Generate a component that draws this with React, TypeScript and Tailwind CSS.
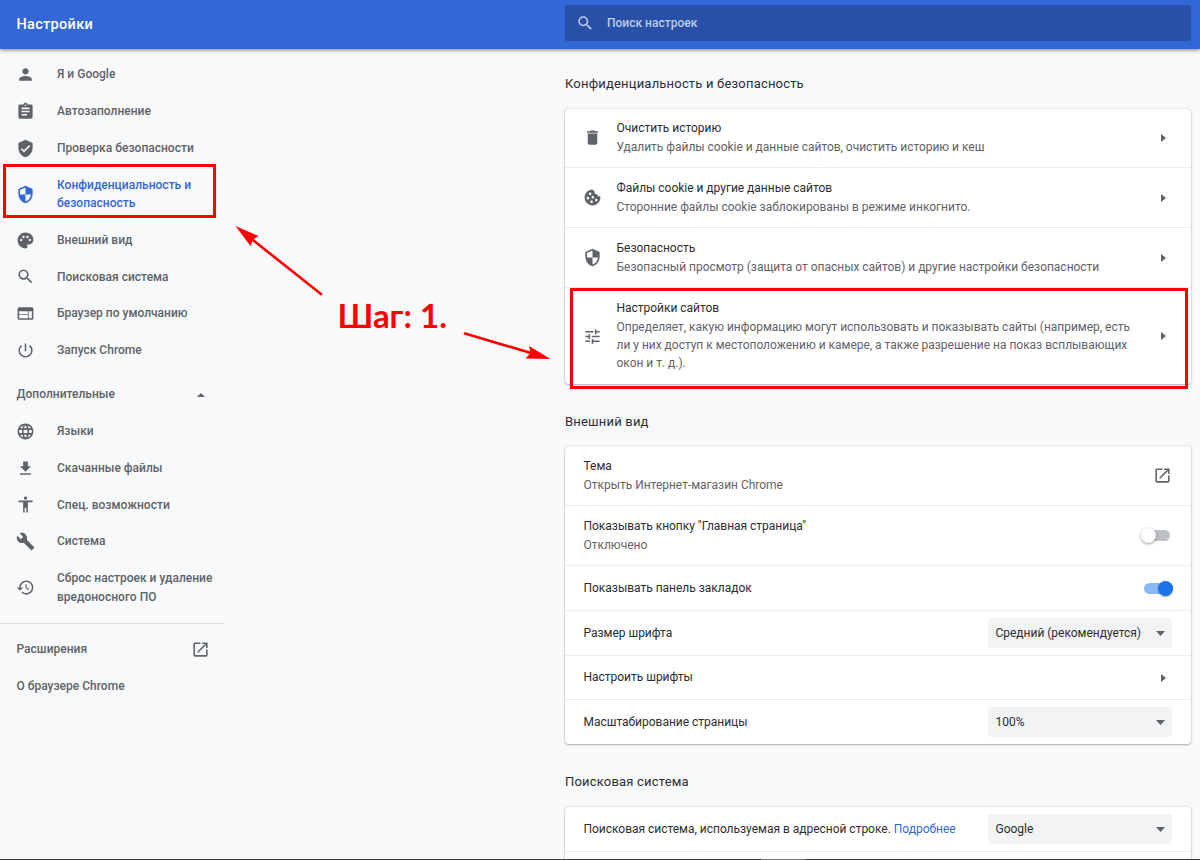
import type { ReactNode } from "react";
import type { IconType } from "react-icons";
import {
  MdPerson, MdAssignment, MdVerifiedUser, MdSecurity, MdPalette, MdSearch, MdWeb,
  MdPowerSettingsNew, MdLanguage, MdFileDownload, MdAccessibility, MdBuild, MdHistory,
  MdOpenInNew, MdDelete, MdTune,
} from "react-icons/md";

type NavEntry = { icon: IconType; lines: string[]; active?: boolean };

const mainNav: NavEntry[] = [
  { icon: MdPerson, lines: ["Я и Google"] },
  { icon: MdAssignment, lines: ["Автозаполнение"] },
  { icon: MdVerifiedUser, lines: ["Проверка безопасности"] },
  { icon: MdSecurity, lines: ["Конфиденциальность и", "безопасность"], active: true },
  { icon: MdPalette, lines: ["Внешний вид"] },
  { icon: MdSearch, lines: ["Поисковая система"] },
  { icon: MdWeb, lines: ["Браузер по умолчанию"] },
  { icon: MdPowerSettingsNew, lines: ["Запуск Chrome"] },
];

const extraNav: NavEntry[] = [
  { icon: MdLanguage, lines: ["Языки"] },
  { icon: MdFileDownload, lines: ["Скачанные файлы"] },
  { icon: MdAccessibility, lines: ["Спец. возможности"] },
  { icon: MdBuild, lines: ["Система"] },
  { icon: MdHistory, lines: ["Сброс настроек и удаление", "вредоносного ПО"] },
];

function NavItem({ icon: Icon, lines, active }: NavEntry) {
  return (
    <a className={`flex items-center py-[9.2px] pl-[16px] ${active ? "text-[#3367d6]" : "text-[#5f6368]"}`}>
      <Icon className="-my-1 mr-[22px] size-[19px] shrink-0" />
      <span>
        {lines.map((line) => (
          <span key={line} className="block whitespace-nowrap">{line}</span>
        ))}
      </span>
    </a>
  );
}

function CookieIcon({ className }: { className?: string }) {
  return (
    <svg viewBox="0 0 24 24" fill="currentColor" className={className}>
      <path
        fillRule="evenodd"
        d="M21.27 10.42c-1.6.52-3.24-.56-3.38-2.42-2.24.1-3.7-1.7-3.2-3.83C12.9 4 12.5 2.7 12.6 2 6.8 1.7 2 6.4 2 12c0 5.52 4.48 10 10 10 5.9 0 10.6-5 9.97-11.2-.25-.05-.48-.18-.7-.38zM9 5.6a1.6 1.6 0 1 1 0 3.2 1.6 1.6 0 0 1 0-3.2zM6.3 11.2a1.6 1.6 0 1 1 0 3.2 1.6 1.6 0 0 1 0-3.2zM12.4 10.2a1.6 1.6 0 1 1 0 3.2 1.6 1.6 0 0 1 0-3.2zM10.8 15.9a1.6 1.6 0 1 1 0 3.2 1.6 1.6 0 0 1 0-3.2zM16.8 13.7a1.6 1.6 0 1 1 0 3.2 1.6 1.6 0 0 1 0-3.2z"
      />
    </svg>
  );
}

function RightCaret() {
  return (
    <svg viewBox="0 0 5 8" className="mr-[6px] h-[8px] w-[5px] shrink-0" fill="#5f6368">
      <path d="M0 0l5 4-5 4z" />
    </svg>
  );
}

function Row({ height, children }: { height: string; children: ReactNode }) {
  return (
    <div className={`flex items-center justify-between border-t border-[#ebecee] pr-[19px] pl-[18px] first:border-t-0 ${height}`}>
      {children}
    </div>
  );
}

function Labels({ title, sub }: { title: string; sub?: string[] }) {
  return (
    <div className="flex-1 pl-[0.5px] whitespace-nowrap">
      <div className="text-[#2c2d30]">{title}</div>
      {sub?.map((s) => (
        <div key={s} className="text-[#5f6368]">{s}</div>
      ))}
    </div>
  );
}

function Select({ value }: { value: string }) {
  return (
    <div className="flex h-[29.5px] w-[184px] items-center justify-between rounded-[4px] bg-[#f1f3f4] pr-[7px] pl-[7.5px] text-[#2c2d30]">
      <span>{value}</span>
      <svg viewBox="0 0 9 5" className="h-[5px] w-[9px]" fill="#5f6368">
        <path d="M0 0h9L4.5 5z" />
      </svg>
    </div>
  );
}

function Toggle({ on }: { on?: boolean }) {
  return on ? (
    <div className="-mr-[0.5px] flex h-[11px] w-[28.5px] items-center justify-end rounded-full bg-[#8cb8f6]">
      <div className="size-[15px] shrink-0 rounded-full bg-[#1a73e8] shadow-[0_1px_2px_rgba(0,0,0,0.35)]" />
    </div>
  ) : (
    <div className="mr-[2.3px] flex h-[11px] w-[26px] items-center rounded-full bg-[#bdc1c6]">
      <div className="-ml-[3px] size-[15px] shrink-0 rounded-full bg-white shadow-[0_1px_3px_rgba(0,0,0,0.4)]" />
    </div>
  );
}

const cardClass = "rounded-[4px] bg-white shadow-[0_1px_2px_rgba(60,64,67,0.35),0_0_2px_rgba(60,64,67,0.25)]";
const headClass = "text-[13px] leading-[18px] tracking-[0.19px] text-[#2c2d30]";

export default function App() {
  return (
    <div className="relative flex h-[860px] w-[1200px] flex-col overflow-hidden bg-[#f8f9fa] font-['Roboto','Liberation_Sans',sans-serif] text-[12px] leading-[18.4px] tracking-[-0.02px]">
      <header className="z-10 flex h-[49px] shrink-0 justify-between bg-[#3367d6] pr-[9px] pl-[16.5px] shadow-[0_1px_4px_rgba(0,0,0,0.5)]">
        <h1 className="mt-[15px] text-[14.5px] leading-[20px] font-medium tracking-[0.3px] text-white">Настройки</h1>
        <div className="mt-[5px] flex h-[36px] w-[626px] items-center rounded-[2px] bg-[#2850a7] pl-[11px] font-medium tracking-[0.02px] text-[#bdcbec]">
          <MdSearch className="mr-[12.5px] size-[18.4px]" />
          Поиск настроек
        </div>
      </header>

      <div className="flex flex-1">
        <nav className="w-[224px] shrink-0 pt-[7.1px] font-medium tracking-[0.01px]">
          {mainNav.map((n) => <NavItem key={n.lines[0]} {...n} />)}
          <div className="mt-[7.4px] flex h-[36.8px] items-center justify-between pr-[19px] pl-[16.5px] text-[#5f6368]">
            Дополнительные
            <svg viewBox="0 0 8 4" className="h-[4px] w-[8px]" fill="#5f6368"><path d="M0 4L4 0l4 4z" /></svg>
          </div>
          {extraNav.map((n) => <NavItem key={n.lines[0]} {...n} />)}
          <div className="mt-[7.4px] mb-[7px] h-px bg-[#dddfe2]" />
          <a className="flex h-[36.8px] items-center justify-between pr-[14px] pl-[16.5px] text-[#5f6368]">
            Расширения
            <MdOpenInNew className="size-[19px]" />
          </a>
          <a className="flex h-[36.8px] items-center pl-[16.5px] text-[#5f6368]">О браузере Chrome</a>
        </nav>

        <main className="ml-[341px] w-[626px]">
          <h2 className={`mt-[26px] ${headClass}`}>Конфиденциальность и безопасность</h2>
          <section className={`mt-[15.5px] ${cardClass}`}>
            <Row height="h-[58.5px]">
              <MdDelete className="mr-[14px] size-[19px] text-[#5f6368]" />
              <Labels title="Очистить историю" sub={["Удалить файлы cookie и данные сайтов, очистить историю и кеш"]} />
              <RightCaret />
            </Row>
            <Row height="h-[60px]">
              <CookieIcon className="mr-[14px] size-[19px] text-[#5f6368]" />
              <Labels title="Файлы cookie и другие данные сайтов" sub={["Сторонние файлы cookie заблокированы в режиме инкогнито."]} />
              <RightCaret />
            </Row>
            <Row height="h-[60px]">
              <MdSecurity className="mr-[14px] size-[19px] text-[#5f6368]" />
              <Labels title="Безопасность" sub={["Безопасный просмотр (защита от опасных сайтов) и другие настройки безопасности"]} />
              <RightCaret />
            </Row>
            <Row height="h-[97px]">
              <MdTune className="mr-[14px] size-[19px] text-[#5f6368]" />
              <Labels
                title="Настройки сайтов"
                sub={[
                  "Определяет, какую информацию могут использовать и показывать сайты (например, есть",
                  "ли у них доступ к местоположению и камере, а также разрешение на показ всплывающих",
                  "окон и т. д.).",
                ]}
              />
              <RightCaret />
            </Row>
          </section>

          <h2 className={`mt-[28.5px] ${headClass}`}>Внешний вид</h2>
          <section className={`mt-[15.5px] ${cardClass}`}>
            <Row height="h-[59px]">
              <Labels title="Тема" sub={["Открыть Интернет-магазин Chrome"]} />
              <MdOpenInNew className="size-[19px] text-[#5f6368]" />
            </Row>
            <Row height="h-[60px]">
              <Labels title={'Показывать кнопку "Главная страница"'} sub={["Отключено"]} />
              <Toggle />
            </Row>
            <Row height="h-[45px]"><Labels title="Показывать панель закладок" /><Toggle on /></Row>
            <Row height="h-[45px]"><Labels title="Размер шрифта" /><Select value="Средний (рекомендуется)" /></Row>
            <Row height="h-[44px]"><Labels title="Настроить шрифты" /><RightCaret /></Row>
            <Row height="h-[45px]"><Labels title="Масштабирование страницы" /><Select value="100%" /></Row>
          </section>

          <h2 className={`mt-[29px] ${headClass}`}>Поисковая система</h2>
          <section className={`mt-[16px] ${cardClass}`}>
            <Row height="h-[44px]">
              <div className="pl-[0.5px] text-[#2c2d30]">
                Поисковая система, используемая в адресной строке. <a className="text-[#3367d6]">Подробнее</a>
              </div>
              <Select value="Google" />
            </Row>
            <Row height="h-[45px]">{null}</Row>
          </section>
        </main>
      </div>

      <div className="absolute bottom-0 left-0 z-20 flex h-px w-full bg-[#3c3c3c]">
        <div className="ml-[761px] w-[44px] bg-[#777777]" />
      </div>
      <div className="absolute top-[164px] left-[3px] h-[54px] w-[213px] border-[3px] border-[#ff0000]" />
      <div className="absolute top-[288px] left-[570px] h-[101px] w-[618px] border-[3px] border-[#ff0000]" />
      <div className="absolute top-[295px] left-[337.5px] font-['Lato','Open_Sans',sans-serif] text-[33px] leading-[40px] font-bold tracking-normal whitespace-nowrap text-[#ff0000]">
        Шаг: 1.
      </div>
      <svg className="absolute top-[220px] left-[230px] h-[150px] w-[330px]" viewBox="230 220 330 150" fill="#ff0000">
        <path d="M321 294L251 238.5" stroke="#ff0000" strokeWidth="2.6" strokeLinecap="round" />
        <path d="M235.5 226L258.5 236L253 239.500L250.500 246z" />
        <path d="M465 333.500L531 353" stroke="#ff0000" strokeWidth="2.6" strokeLinecap="round" />
        <path d="M550.500 359L529 346L530.500 353L525.500 358.500z" />
      </svg>
    </div>
  );
}
